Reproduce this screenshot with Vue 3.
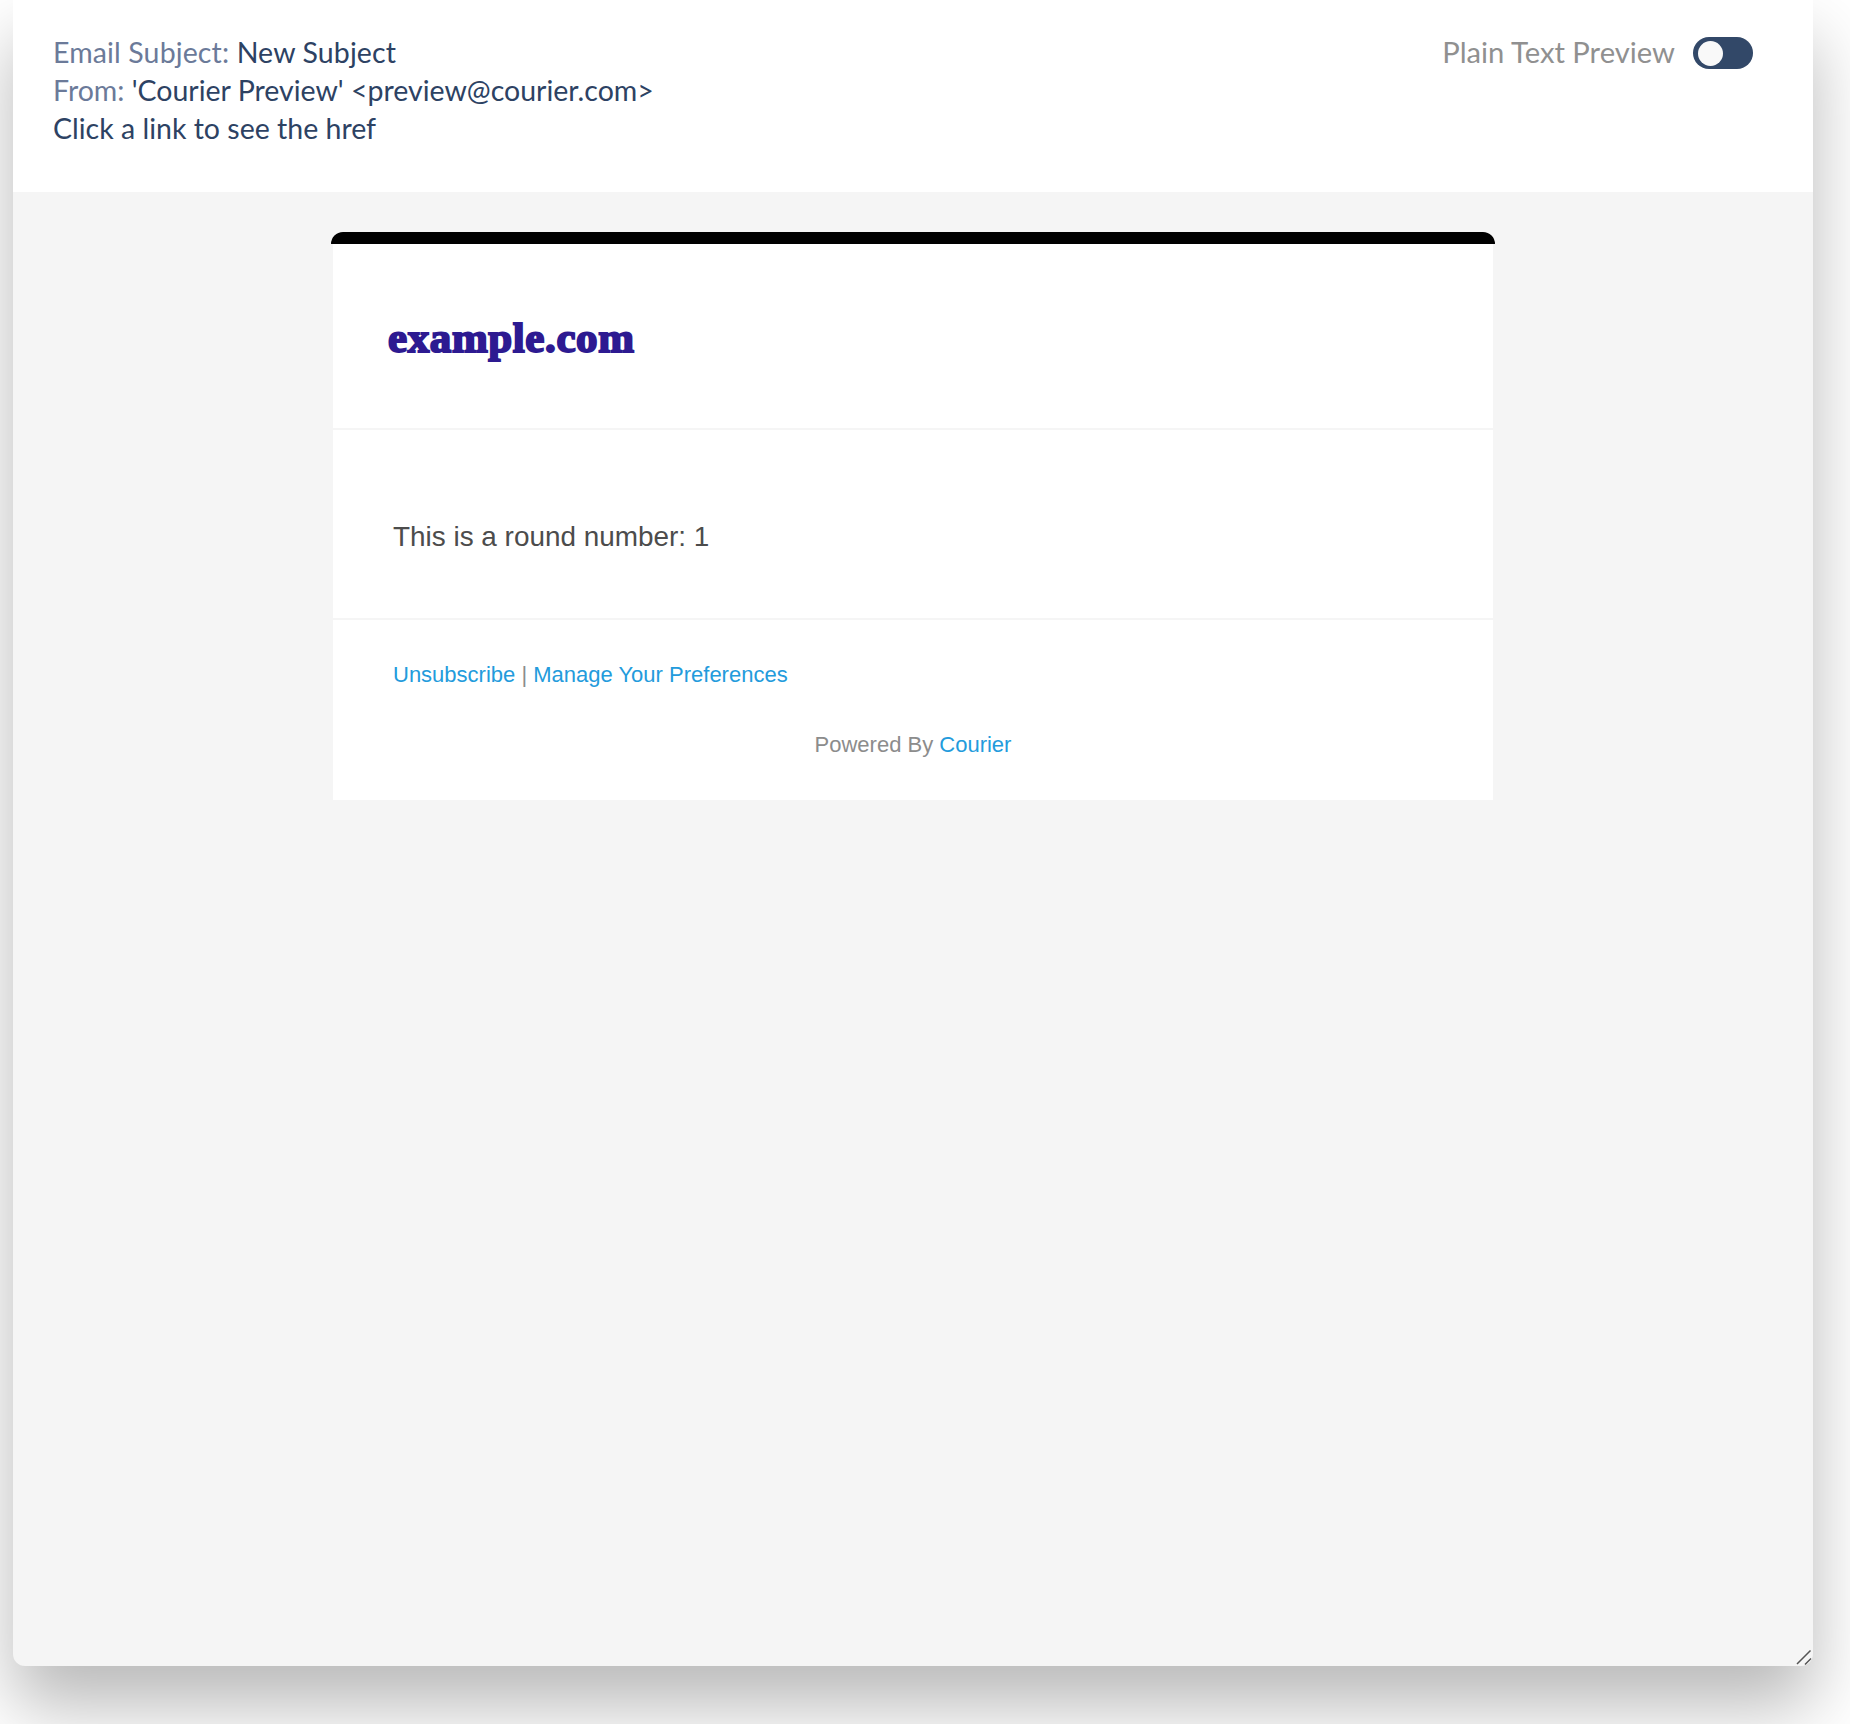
<script setup>
const title = 'example.com'
</script>

<template>
  <div class="stage">
    <div class="panel">
      <header class="top">
        <div class="meta">
          <div class="subject"><span class="label">Email Subject:</span> New Subject</div>
          <div><span class="label">From:</span> 'Courier Preview' &lt;preview@courier.com&gt;</div>
          <div>Click a link to see the href</div>
        </div>
        <div class="plain">
          <span>Plain Text Preview</span>
          <span class="toggle"><span class="knob"></span></span>
        </div>
      </header>
      <main class="body">
        <div class="email">
          <div class="bar"></div>
          <div class="card">
            <div class="logo-row"><span class="logo">{{ title }}</span></div>
            <div class="content">This is a round number: 1</div>
            <div class="foot">
              <div class="links"><a>Unsubscribe</a> <span class="pipe">|</span> <a>Manage Your Preferences</a></div>
              <div class="powered">Powered By <a>Courier</a></div>
            </div>
          </div>
        </div>
      </main>
      <svg class="grip" width="16" height="16" viewBox="0 0 16 16">
        <path d="M1 14 L14.5 0.5 M9 14.5 L15 8.5" stroke="#555" stroke-width="1.5" fill="none" />
      </svg>
    </div>
  </div>
</template>

<style scoped>
.stage {
  width: 1850px;
  height: 1724px;
  padding-left: 13px;
  box-sizing: border-box;
  overflow: hidden;
  background: #fff;
}
.panel {
  position: relative;
  width: 1800px;
  height: 1666px;
  display: flex;
  flex-direction: column;
  background: #f5f5f5;
  border-radius: 0 0 12px 12px;
  box-shadow: 0 40px 70px 0 rgba(0, 0, 0, 0.28);
}
.top {
  height: 192px;
  box-sizing: border-box;
  padding: 33px 60px 0 40px;
  display: flex;
  justify-content: space-between;
  align-items: flex-start;
  background: #fff;
  font-family: "Lato", "Noto Sans", sans-serif;
  font-size: 28.5px;
  line-height: 38px;
  color: #2d4263;
}
.subject { letter-spacing: 0.13px; }
.label { color: #6b7a99; }
.plain {
  display: flex;
  align-items: center;
  gap: 18px;
  font-size: 29.2px;
  color: #909090;
}
.toggle {
  width: 60px;
  height: 32px;
  margin-top: 2px;
  border-radius: 16px;
  background: #324868;
  display: flex;
  align-items: center;
  padding-left: 5px;
  box-sizing: border-box;
}
.knob {
  width: 25px;
  height: 25px;
  border-radius: 50%;
  background: #f9f9f9;
}
.body {
  flex: 1;
  padding: 40px 0 0 318px;
}
.email { width: 1164px; }
.bar {
  height: 12px;
  background: #000;
  border-radius: 12px 12px 0 0;
}
.card {
  margin: 0 2px;
  background: #fff;
  font-family: "Liberation Sans", Arial, sans-serif;
}
.logo-row {
  height: 186px;
  box-sizing: border-box;
  padding: 69px 0 0 55px;
  border-bottom: 2px solid #f5f5f5;
}
.logo {
  font-family: "Liberation Serif", serif;
  font-weight: 700;
  font-size: 43px;
  line-height: 50px;
  color: #2d1a91;
  -webkit-text-stroke: 2px #2d1a91;
  letter-spacing: 0.6px;
}
.content {
  height: 190px;
  box-sizing: border-box;
  padding: 90px 0 0 60px;
  font-size: 27.9px;
  line-height: 34px;
  color: #4c4c4c;
  border-bottom: 2px solid #f5f5f5;
}
.foot {
  height: 180px;
  box-sizing: border-box;
  padding: 41px 60px 0;
  font-size: 22px;
  line-height: 28px;
  color: #8c8c8c;
}
.links a, .powered a { color: #239bdc; }
.pipe { color: #8c8c8c; }
.powered {
  margin-top: 42px;
  text-align: center;
}
.grip {
  position: absolute;
  right: 1px;
  bottom: 0;
}
</style>
